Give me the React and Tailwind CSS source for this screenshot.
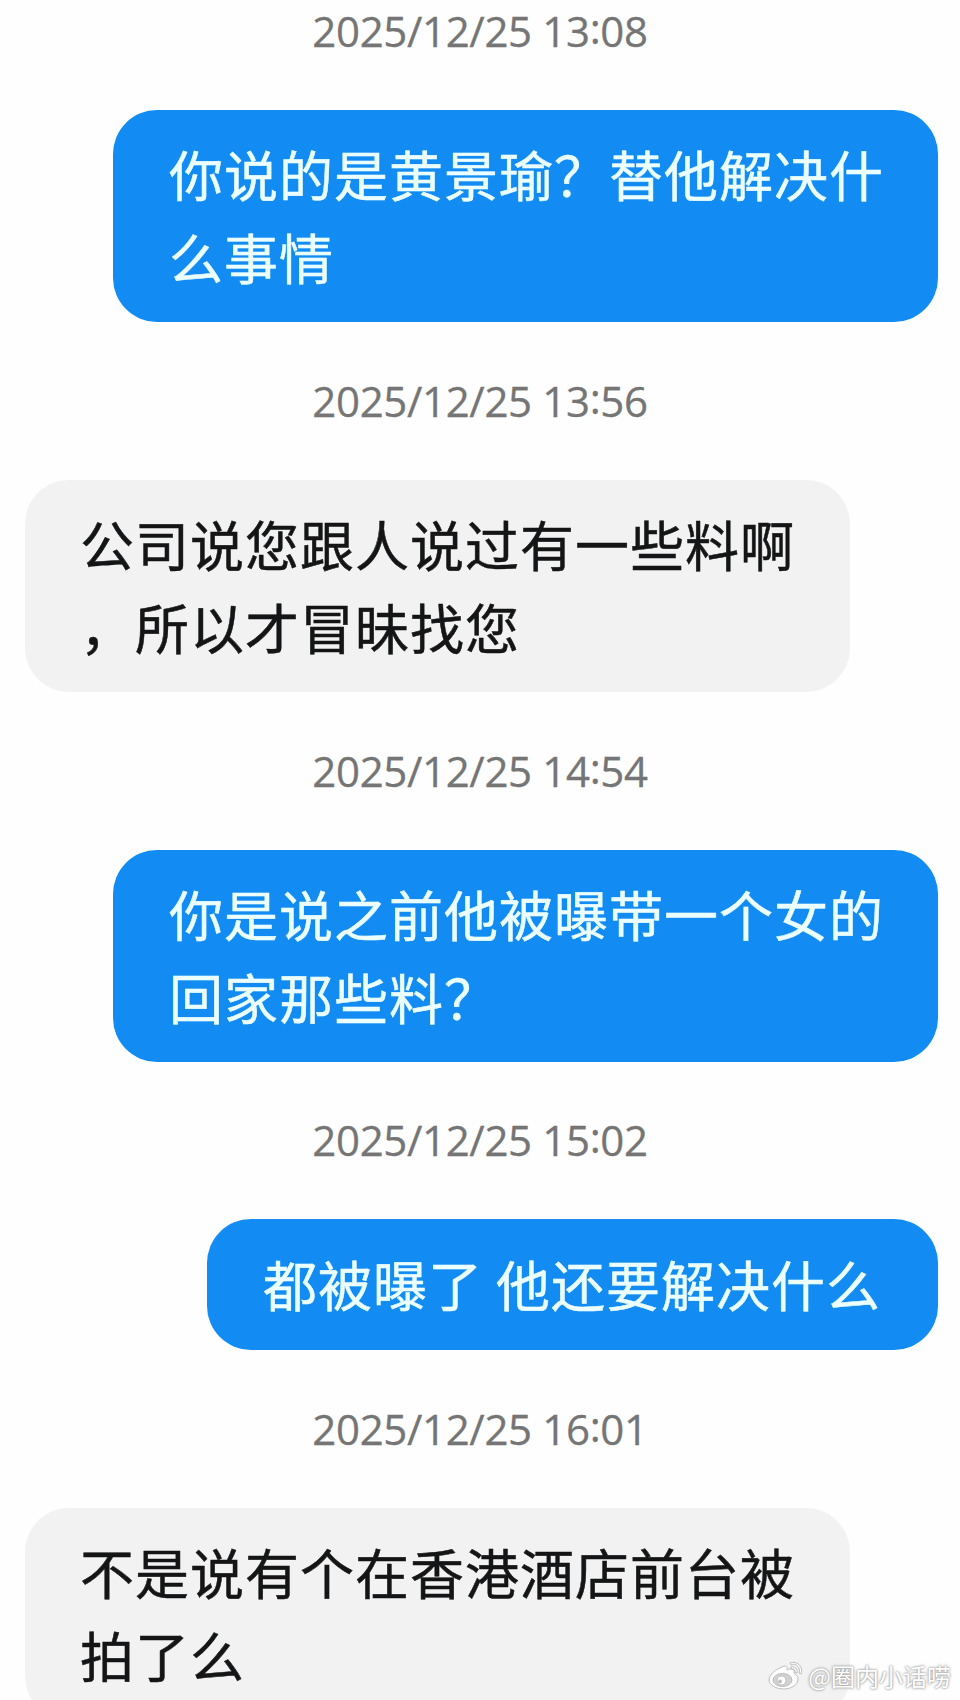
const mensajes = [
  { hora: '2025/12/25 13:08', propio: true, lineas: ['你说的是黄景瑜？替他解决什', '么事情'] },
  { hora: '2025/12/25 13:56', propio: false, lineas: ['公司说您跟人说过有一些料啊', '，所以才冒昧找您'] },
  { hora: '2025/12/25 14:54', propio: true, lineas: ['你是说之前他被曝带一个女的', '回家那些料？'] },
  { hora: '2025/12/25 15:02', propio: true, lineas: ['都被曝了 他还要解决什么'] },
  { hora: '2025/12/25 16:01', propio: false, lineas: ['不是说有个在香港酒店前台被', '拍了么'] },
]

function Hora({ valor }) {
  const [antes, despues] = valor.split(':')
  return (
    <time className="h-[50px] w-full text-center text-[42px] leading-[50px] tracking-[-0.35px] text-[#757575] [-webkit-text-stroke:0.3px_#757575] font-['Open_Sans','Noto_Sans',sans-serif]">
      {antes}<span className="relative -top-[3px]">:</span>{despues}
    </time>
  )
}

function Burbuja({ propio, lineas }) {
  const corta = lineas.length === 1
  return (
    <div
      className={`flex flex-col rounded-[44px] text-[54px] leading-[83px] tracking-[1px] whitespace-pre [-webkit-text-stroke:0.5px_currentColor] ${
        propio ? 'self-end mr-[22px] pl-[56px] bg-[#128cf2] text-[#ecffff]' : 'self-start ml-[25px] pl-[55px] bg-[#f2f2f2] text-[#141516]'
      } ${corta ? 'h-[131px] w-[731px] pt-[23px]' : 'h-[212px] w-[825px] pt-[22px]'}`}
    >
      {lineas.map(linea => (
        <p key={linea}>{linea}</p>
      ))}
    </div>
  )
}

function LogoWeibo() {
  return (
    <svg className="h-[30px] w-[36px]" viewBox="0 0 36 30" fill="#fff" stroke="#bdbdbd" strokeWidth="1">
      <path d="M14 6c3-2 6-1 5 3c4-2 8-1 7 3c0 1 4 2 4 6c0 5-6 10-14 10S1 24 1 19S8 8 14 6Z" />
      <ellipse cx="14.500" cy="19" rx="9.500" ry="6.500" fill="#d2d2d2" />
      <circle cx="13.500" cy="19.500" r="4.500" />
      <circle cx="12" cy="20.500" r="1.500" fill="#bdbdbd" />
      <path d="M22 2c7-3 14 4 11 11l-2-1c2-5-3-11-8-8Z" />
      <path d="M23 6c4-1 7 2 6 6l-2-.5c.5-3-1-4-3.500-3.500Z" />
    </svg>
  )
}

export default function App() {
  return (
    <main
      lang="zh-CN"
      className="relative flex h-[1700px] w-[960px] flex-col overflow-hidden bg-[#fefefe] font-['Noto_Sans_CJK_SC',sans-serif]"
    >
      <div className="flex flex-col pt-[6px]">
        {mensajes.map(({ hora, propio, lineas }) => (
          <section key={hora} className="flex flex-col gap-[54px] pb-[53.800px]">
            <Hora valor={hora} />
            <Burbuja propio={propio} lineas={lineas} />
          </section>
        ))}
      </div>

      {/* Marca de agua */}
      <div className="absolute right-[9px] bottom-[7px] flex items-center gap-[4px] text-[24px] leading-[34px] text-white [text-shadow:0_0_2px_#999,0_0_3px_#999]">
        <LogoWeibo />
        <span>@圈内小话唠</span>
      </div>
    </main>
  )
}
